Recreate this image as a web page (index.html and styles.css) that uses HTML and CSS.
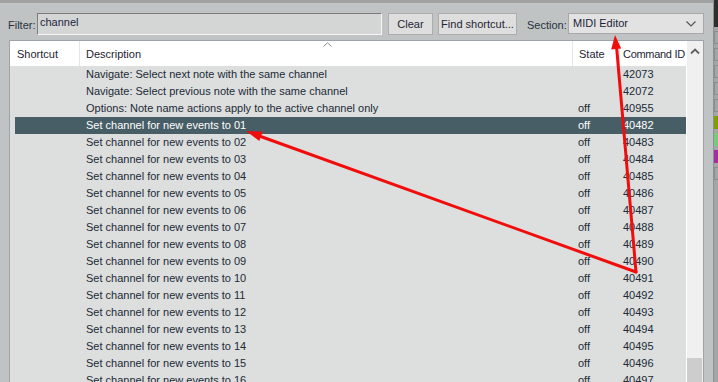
FILE: index.html
```html
<!DOCTYPE html>
<html>
<head>
<meta charset="utf-8">
<link rel="stylesheet" href="styles.css">
</head>
<body>
<div class="app">
  <div class="main">
    <div class="topband"></div>
    <div class="toolbar">
      <span class="lbl filter-lbl">Filter:</span>
      <div class="input">channel</div>
      <div class="btn btn-clear">Clear</div>
      <div class="btn btn-find">Find shortcut...</div>
      <span class="lbl section-lbl">Section:</span>
      <div class="combo">
        <span>MIDI Editor</span>
        <svg class="chev" width="10" height="6" viewBox="0 0 10 6"><polyline points="0.5,0.5 5,5 9.5,0.5" fill="none" stroke="#555" stroke-width="1.2"/></svg>
      </div>
    </div>
    <div class="frame">
      <div class="table">
        <div class="head">
          <div class="hc c-short">Shortcut</div>
          <div class="hc c-desc">Description
            <svg class="sort" width="9" height="5" viewBox="0 0 9 5"><polyline points="0.5,4.5 4.5,0.8 8.5,4.5" fill="none" stroke="#8a8a8a" stroke-width="1"/></svg>
          </div>
          <div class="hc c-state">State</div>
          <div class="hc c-cmd">Command ID</div>
        </div>
        <div class="body">
          <div class="row"><span></span><span class="d">Navigate: Select next note with the same channel</span><span class="s"></span><span class="n">42073</span></div>
          <div class="row"><span></span><span class="d">Navigate: Select previous note with the same channel</span><span class="s"></span><span class="n">42072</span></div>
          <div class="row"><span></span><span class="d">Options: Note name actions apply to the active channel only</span><span class="s">off</span><span class="n">40955</span></div>
          <div class="row sel"><span></span><span class="d">Set channel for new events to 01</span><span class="s">off</span><span class="n">40482</span></div>
          <div class="row"><span></span><span class="d">Set channel for new events to 02</span><span class="s">off</span><span class="n">40483</span></div>
          <div class="row"><span></span><span class="d">Set channel for new events to 03</span><span class="s">off</span><span class="n">40484</span></div>
          <div class="row"><span></span><span class="d">Set channel for new events to 04</span><span class="s">off</span><span class="n">40485</span></div>
          <div class="row"><span></span><span class="d">Set channel for new events to 05</span><span class="s">off</span><span class="n">40486</span></div>
          <div class="row"><span></span><span class="d">Set channel for new events to 06</span><span class="s">off</span><span class="n">40487</span></div>
          <div class="row"><span></span><span class="d">Set channel for new events to 07</span><span class="s">off</span><span class="n">40488</span></div>
          <div class="row"><span></span><span class="d">Set channel for new events to 08</span><span class="s">off</span><span class="n">40489</span></div>
          <div class="row"><span></span><span class="d">Set channel for new events to 09</span><span class="s">off</span><span class="n">40490</span></div>
          <div class="row"><span></span><span class="d">Set channel for new events to 10</span><span class="s">off</span><span class="n">40491</span></div>
          <div class="row"><span></span><span class="d">Set channel for new events to 11</span><span class="s">off</span><span class="n">40492</span></div>
          <div class="row"><span></span><span class="d">Set channel for new events to 12</span><span class="s">off</span><span class="n">40493</span></div>
          <div class="row"><span></span><span class="d">Set channel for new events to 13</span><span class="s">off</span><span class="n">40494</span></div>
          <div class="row"><span></span><span class="d">Set channel for new events to 14</span><span class="s">off</span><span class="n">40495</span></div>
          <div class="row"><span></span><span class="d">Set channel for new events to 15</span><span class="s">off</span><span class="n">40496</span></div>
          <div class="row"><span></span><span class="d">Set channel for new events to 16</span><span class="s">off</span><span class="n">40497</span></div>
        </div>
      </div>
      <div class="scrollbar">
        <svg class="up" width="10" height="7" viewBox="0 0 10 7"><polyline points="1,5.5 5,1.5 9,5.5" fill="none" stroke="#606060" stroke-width="1.8"/></svg>
        <div class="thumb"></div>
      </div>
    </div>
  </div>
  <div class="side">
    <div class="side-top"></div>
    <div class="sb"></div><div class="sb"></div><div class="sb"></div><div class="sb"></div><div class="sb"></div>
    <div class="sb olive"></div>
    <div class="sb lgreen"></div>
    <div class="sb purple"></div>
    <div class="sb"></div>
  </div>
</div>
<svg class="arrows" width="718" height="382" viewBox="0 0 718 382">
  <line x1="636" y1="272" x2="258" y2="135.5" stroke="#f20d0d" stroke-width="3" stroke-linecap="round"/>
  <polygon points="246,131 262.7,131.7 259.3,141.1" fill="#f20d0d"/>
  <line x1="636" y1="272" x2="616.5" y2="46" stroke="#f20d0d" stroke-width="3" stroke-linecap="round"/>
  <polygon points="615,35 621.2,48.6 611.2,49.4" fill="#f20d0d"/>
</svg>
</body>
</html>
```
FILE: styles.css
```css
html, body {
  margin: 0;
  padding: 0;
}
body {
  width: 718px;
  height: 382px;
  overflow: hidden;
  background: #bfc3c3;
  font-family: "Liberation Sans", Arial, sans-serif;
  font-size: 11px;
  color: #222a36;
  position: relative;
}
.app {
  display: flex;
  height: 382px;
}
.main {
  width: 714px;
  display: flex;
  flex-direction: column;
}
.topband {
  height: 3px;
  background: #a0a2a2;
  flex: none;
}
.toolbar {
  height: 37px;
  flex: none;
  display: flex;
  align-items: flex-start;
  padding-top: 10px;
  box-sizing: border-box;
  white-space: nowrap;
}
.lbl {
  line-height: 13px;
  padding-top: 6px;
  color: #2a3240;
}
.filter-lbl {
  margin-left: 8px;
  width: 29px;
}
.input {
  width: 345px;
  height: 22px;
  box-sizing: border-box;
  background: #d4d6d6;
  border-top: 1px solid #7c7c7c;
  border-left: 1px solid #7c7c7c;
  border-right: 1px solid #f6f6f6;
  border-bottom: 1px solid #f6f6f6;
  padding: 2px 0 0 2px;
  line-height: 13px;
  color: #1e2440;
}
.btn {
  height: 22px;
  box-sizing: border-box;
  background: #dedede;
  border: 1px solid #adadad;
  display: flex;
  align-items: center;
  justify-content: center;
  line-height: 13px;
  color: #1e2533;
}
.btn-clear {
  margin-left: 6px;
  width: 45px;
}
.btn-find {
  margin-left: 5px;
  width: 79px;
}
.section-lbl {
  margin-left: 10px;
  width: 41px;
}
.combo {
  width: 136px;
  height: 21px;
  box-sizing: border-box;
  background: #e2e2e2;
  border: 1px solid #a8a8a8;
  display: flex;
  align-items: center;
  justify-content: space-between;
  padding: 0 4px 0 4px;
  line-height: 13px;
  color: #1a2238;
}
.chev {
  margin-right: 3px;
  margin-top: 1px;
}
.frame {
  margin-left: 9px;
  width: 695px;
  flex: 1;
  box-sizing: border-box;
  border: 1px solid #9ea3aa;
  border-bottom: none;
  display: flex;
  overflow: hidden;
}
.table {
  width: 676px;
  display: flex;
  flex-direction: column;
  background: #dcdfde;
}
.head {
  height: 25px;
  flex: none;
  background: #ffffff;
  display: grid;
  grid-template-columns: 70px 493px 47px 66px;
}
.hc {
  border-right: 1px solid #e6e6e6;
  display: flex;
  align-items: center;
  padding-top: 1px;
  box-sizing: border-box;
  line-height: 13px;
  color: #1e2533;
  position: relative;
  white-space: nowrap;
}
.c-short { padding-left: 7px; }
.c-desc { padding-left: 6px; }
.c-state { padding-left: 6px; }
.c-cmd { padding-left: 3px; border-right: none; letter-spacing: -0.3px; }
.sort {
  position: absolute;
  left: 243px;
  top: 1px;
}
.body {
  padding-left: 5px;
}
.row {
  height: 17px;
  display: grid;
  grid-template-columns: 65px 493px 47px 66px;
  align-items: center;
  line-height: 13px;
  white-space: nowrap;
}
.row .d { padding-left: 6px; }
.row .s { padding-left: 5px; }
.row .n { padding-left: 3px; }
.row.sel {
  background: #475e66;
  color: #ffffff;
}
.scrollbar {
  width: 17px;
  box-sizing: border-box;
  border-left: 1px solid #ffffff;
  background: #f0f0f0;
  position: relative;
}
.up {
  position: absolute;
  left: 3px;
  top: 7px;
}
.thumb {
  position: absolute;
  left: 0;
  width: 15px;
  top: 317px;
  height: 30px;
  background: #cdcdcd;
}
.side {
  width: 4px;
  border-left: 1px solid #8d9191;
  background: #a2a6a6;
  display: flex;
  flex-direction: column;
}
.side-top {
  height: 27px;
  background: #2e2e2e;
  margin-bottom: 4px;
}
.sb {
  height: 13px;
  margin-bottom: 4px;
  border: 1px solid #8a8e8e;
  border-right: none;
  box-sizing: border-box;
}
.sb.olive { background: #819e00; border-color: #819e00; }
.sb.lgreen { background: #79c97a; border-color: #79c97a; }
.sb.purple { background: #a52ca5; border-color: #a52ca5; }
.arrows {
  position: absolute;
  left: 0;
  top: 0;
  pointer-events: none;
}
```
